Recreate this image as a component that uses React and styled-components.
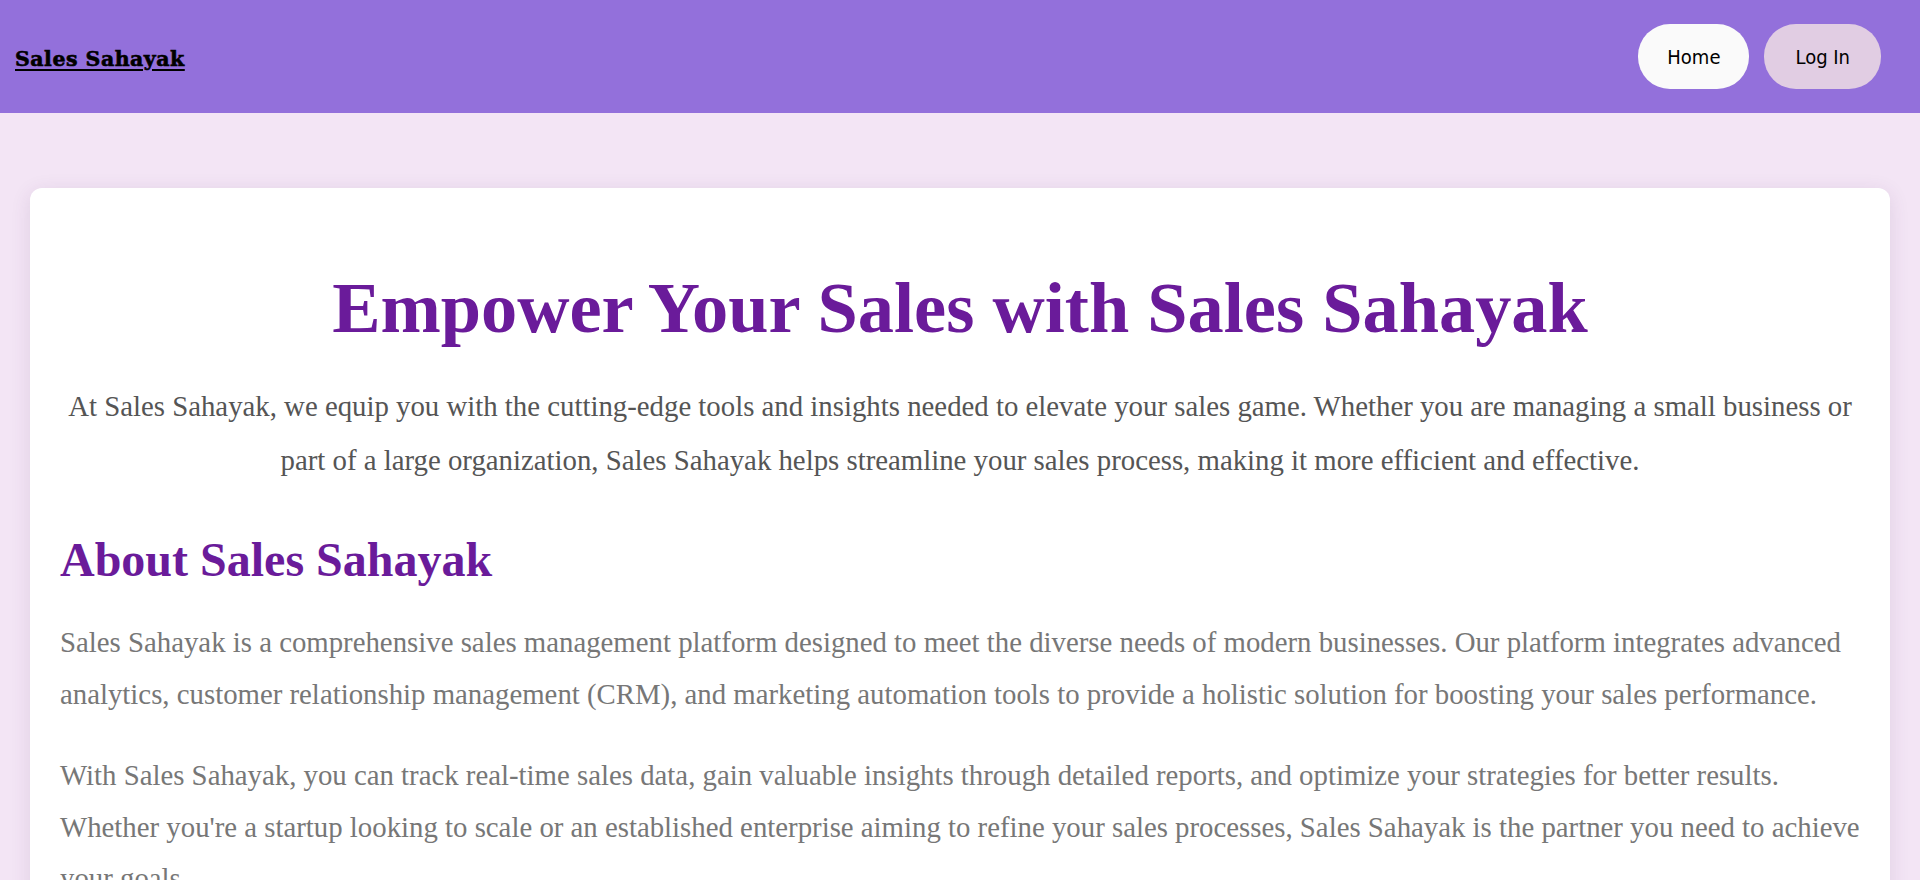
import React from 'react'
import styled, { createGlobalStyle } from 'styled-components'

const GlobalStyle = createGlobalStyle`
    body {
        margin: 0;
        background: #f3e5f5;
        font-family: "Liberation Serif", "Times New Roman", serif;
    }
`

const Header = styled.header`
    height: 113px;
    background: #9370db;
    display: flex;
    align-items: center;
    justify-content: space-between;
    padding: 0 39px 0 15px;
`

const Logo = styled.a`
    font-family: "DejaVu Serif", serif;
    font-weight: 900;
    font-size: 20.5px;
    letter-spacing: 0.5px;
    -webkit-text-stroke: 0.6px #000;
    color: #000;
    text-decoration: underline;
    text-decoration-thickness: 2px;
    text-underline-offset: 3px;
    margin-top: 4px;
`

const Nav = styled.nav`
    display: flex;
    gap: 15px;
`

const NavButton = styled.button`
    height: 65px;
    padding: 0 ${props => props.$pad || 28}px;
    border: none;
    border-radius: 32px;
    background: ${props => props.$bg};
    font-family: "DejaVu Sans Condensed", "DejaVu Sans", sans-serif;
    font-size: 20px;
    color: #000;
    cursor: pointer;
`

const Main = styled.main`
    padding: 75px 30px 0;
`

const Card = styled.section`
    background: #fff;
    border-radius: 12px;
    box-shadow: 0 4px 20px rgba(80, 40, 100, 0.12);
    padding: 30px 30px 40px;
`

const Title = styled.h1`
    margin: 50px 0 31px;
    font-size: 72.4px;
    line-height: 80px;
    font-weight: 700;
    color: #6a1b9a;
    text-align: center;
`

const Lead = styled.p`
    margin: 0 0 45px;
    font-size: 28.8px;
    line-height: 54px;
    color: #555;
    text-align: center;
`

const SectionTitle = styled.h2`
    margin: 0 0 29px;
    font-size: 48px;
    line-height: 56px;
    font-weight: 700;
    color: #6a1b9a;
`

const Text = styled.p`
    margin: 0 0 30px;
    font-size: 28.8px;
    line-height: 51.5px;
    color: #777;
`

function App() {
    return (
        <>
            <GlobalStyle />
            <Header>
                <Logo href="#">Sales Sahayak</Logo>
                <Nav>
                    <NavButton $bg="#fafafa" $pad={29}>Home</NavButton>
                    <NavButton $bg="#e1cde3" $pad={31}>Log In</NavButton>
                </Nav>
            </Header>
            <Main>
                <Card>
                    <Title>Empower Your Sales with Sales Sahayak</Title>
                    <Lead>
                        At Sales Sahayak, we equip you with the cutting-edge tools and insights needed to elevate your sales game. Whether you are managing a small business or part of a large organization, Sales Sahayak helps streamline your sales process, making it more efficient and effective.
                    </Lead>
                    <SectionTitle>About Sales Sahayak</SectionTitle>
                    <Text>
                        Sales Sahayak is a comprehensive sales management platform designed to meet the diverse needs of modern businesses. Our platform integrates advanced analytics, customer relationship management (CRM), and marketing automation tools to provide a holistic solution for boosting your sales performance.
                    </Text>
                    <Text>
                        With Sales Sahayak, you can track real-time sales data, gain valuable insights through detailed reports, and optimize your strategies for better results. Whether you're a startup looking to scale or an established enterprise aiming to refine your sales processes, Sales Sahayak is the partner you need to achieve your goals.
                    </Text>
                </Card>
            </Main>
        </>
    )
}

export default App
